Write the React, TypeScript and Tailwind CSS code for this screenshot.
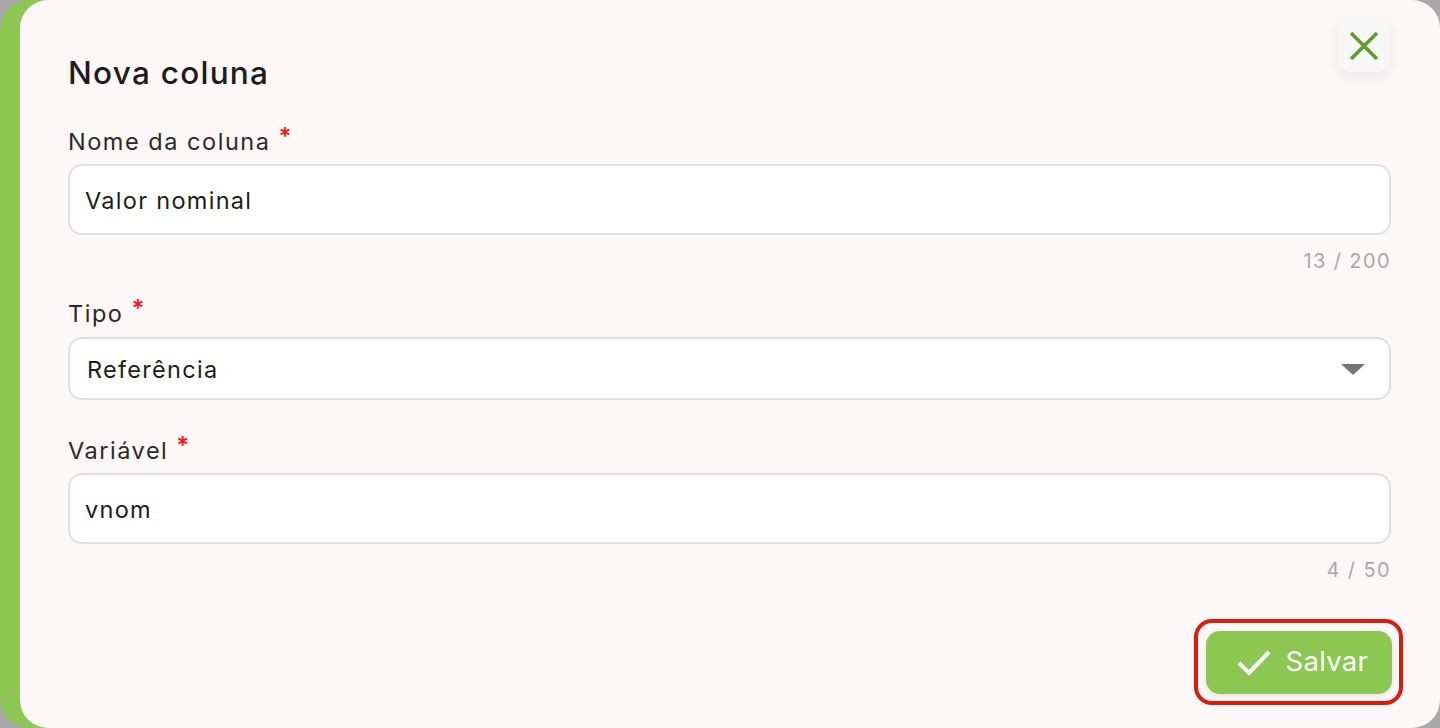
import React from "react";

const font = { fontFamily: "Inter, 'Noto Sans', sans-serif" };

function Label({ text }: { text: string }) {
  return (
    <div className="h-[36px] leading-[36px] text-[23.5px] tracking-[0.065em] text-[#2a2a2a] flex items-center">
      <span>{text}</span>
      <span className="text-[#ff1a1a] ml-[8px] -mt-[10px] text-[24px] font-semibold">*</span>
    </div>
  );
}

export default function App() {
  return (
    <div className="w-[1440px] h-[728px] bg-[#a9a9a9] overflow-hidden" style={font}>
      <div className="w-full h-full bg-[#8bc751] rounded-[30px] flex">
        <div className="relative ml-[20px] flex-1 h-full bg-[#fbf8f7] rounded-[28px] pl-[48px] pr-[49px] pt-[53px] flex flex-col">
          <button className="absolute top-[20px] right-[50px] w-[52px] h-[52px] rounded-[12px] bg-[#f7f7f7] shadow-[0_4px_16px_rgba(0,0,0,0.07)] flex items-center justify-center">
            <svg width="30" height="30" viewBox="0 0 30 30">
              <path d="M2 2 L28 28 M28 2 L2 28" stroke="#5e9e2a" strokeWidth="3.6" strokeLinecap="butt" />
            </svg>
          </button>

          <h1 className="h-[40px] leading-[40px] text-[31.5px] font-medium tracking-[0.04em] text-[#1c1c1c]">
            Nova coluna
          </h1>

          <div className="mt-[31px]">
            <Label text="Nome da coluna" />
          </div>
          <div className="mt-[4px] h-[71px] bg-white border-2 border-[#e0e0e0] rounded-[14px] flex items-center pl-[15px] pt-[2px] text-[23.5px] tracking-[0.055em] text-[#1c1c1c]">
            Valor nominal
          </div>
          <div className="mt-[14px] h-[24px] leading-[24px] text-right text-[20px] tracking-[0.07em] text-[#a9a9a9]">
            13 / 200
          </div>

          <div className="mt-[23px]">
            <Label text="Tipo" />
          </div>
          <div className="mt-[5px] h-[63px] bg-white border-2 border-[#e0e0e0] rounded-[14px] flex items-center justify-between pl-[17px] pr-[24px] pt-[2px] text-[23.5px] tracking-[0.055em] text-[#1c1c1c]">
            <span>Referência</span>
            <svg width="24" height="11" viewBox="0 0 24 11">
              <path d="M0 0 L24 0 L12 11 Z" fill="#757575" />
            </svg>
          </div>

          <div className="mt-[33px]">
            <Label text="Variável" />
          </div>
          <div className="mt-[4px] h-[71px] bg-white border-2 border-[#e0e0e0] rounded-[14px] flex items-center pl-[15px] pt-[2px] text-[23.5px] tracking-[0.055em] text-[#1c1c1c]">
            vnom
          </div>
          <div className="mt-[14px] h-[24px] leading-[24px] text-right text-[20px] tracking-[0.07em] text-[#a9a9a9]">
            4 / 50
          </div>

          <div className="mt-[37px] flex justify-end -mr-[12px]">
            <div className="border-[4.5px] border-[#e01a0a] rounded-[18px] p-[7.5px]">
              <button className="w-[186px] h-[63px] bg-[#8bc751] rounded-[14px] flex items-center justify-start pl-[31px] gap-[15px] text-white text-[27.5px] shadow-[0_2px_6px_rgba(0,0,0,0.08)]">
                <svg width="34" height="28" viewBox="0 0 34 28">
                  <path d="M2 15 L12 25 L32 4" stroke="white" strokeWidth="4" fill="none" />
                </svg>
                <span className="tracking-[0.01em]">Salvar</span>
              </button>
            </div>
          </div>
        </div>
      </div>
    </div>
  );
}
